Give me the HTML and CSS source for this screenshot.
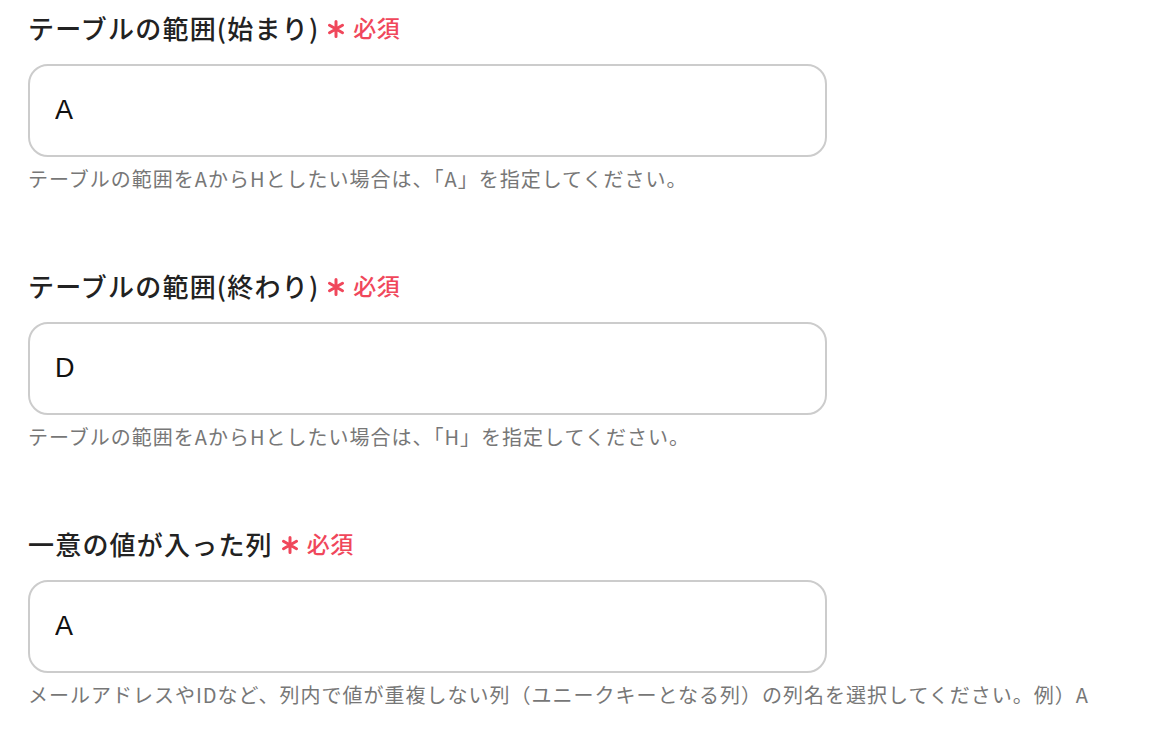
FILE: index.html
```html
<!DOCTYPE html>
<html lang="ja">
<head>
  <meta charset="UTF-8">
  <title>テーブル設定</title>
  <link rel="stylesheet" href="styles.css">
</head>
<body>
  <div class="form">
    <div class="field">
      <label class="label">テーブルの範囲(始まり)
        <span class="required">
          <svg class="star" viewBox="0 0 18 18" width="18" height="18"><path d="M9 1.5v15M2.5 5.25l13 7.5M15.5 5.25l-13 7.5"/></svg>必須
        </span>
      </label>
      <input type="text" class="box" value="A">
      <p class="help">テーブルの範囲をAからHとしたい場合は、「A」を指定してください。</p>
    </div>

    <div class="field">
      <label class="label">テーブルの範囲(終わり)
        <span class="required">
          <svg class="star" viewBox="0 0 18 18" width="18" height="18"><path d="M9 1.5v15M2.5 5.25l13 7.5M15.5 5.25l-13 7.5"/></svg>必須
        </span>
      </label>
      <input type="text" class="box" value="D">
      <p class="help">テーブルの範囲をAからHとしたい場合は、「H」を指定してください。</p>
    </div>

    <div class="field">
      <label class="label">一意の値が入った列
        <span class="required">
          <svg class="star" viewBox="0 0 18 18" width="18" height="18"><path d="M9 1.5v15M2.5 5.25l13 7.5M15.5 5.25l-13 7.5"/></svg>必須
        </span>
      </label>
      <input type="text" class="box" value="A">
      <p class="help">メールアドレスやIDなど、列内で値が重複しない列（ユニークキーとなる列）の列名を選択してください。例）A</p>
    </div>
  </div>
</body>
</html>
```

FILE: styles.css
```css
body {
  margin: 0;
  background: #fff;
  font-family: "Noto Sans CJK JP", "Noto Sans", sans-serif;
  color: #222;
}

.form {
  padding: 7px 0 0 28px;
}

.field {
  margin-bottom: 72px;
}

.field:last-child {
  margin-bottom: 0;
}

.label {
  display: flex;
  align-items: center;
  height: 40px;
  font-size: 26px;
  font-weight: 500;
  letter-spacing: 1.2px;
}

.required {
  display: inline-flex;
  align-items: center;
  margin-left: 8px;
  font-size: 23px;
  font-weight: 500;
  color: #f0475b;
  letter-spacing: 0.5px;
}

.star {
  margin-right: 8px;
  margin-top: 3px;
  fill: none;
  stroke: #f0475b;
  stroke-width: 3;
  stroke-linecap: round;
}

.box {
  display: block;
  box-sizing: border-box;
  width: 799px;
  height: 93px;
  margin-top: 17px;
  padding: 0 25px;
  border: 2px solid #cccccc;
  border-radius: 20px;
  font-family: "Liberation Sans", "Noto Sans", sans-serif;
  font-size: 27px;
  color: #111;
  background: #fff;
  outline: none;
}

.help {
  margin: 8px 0 0;
  height: 28px;
  line-height: 28px;
  font-size: 20px;
  letter-spacing: 1px;
  color: #777;
  white-space: nowrap;
}
```
